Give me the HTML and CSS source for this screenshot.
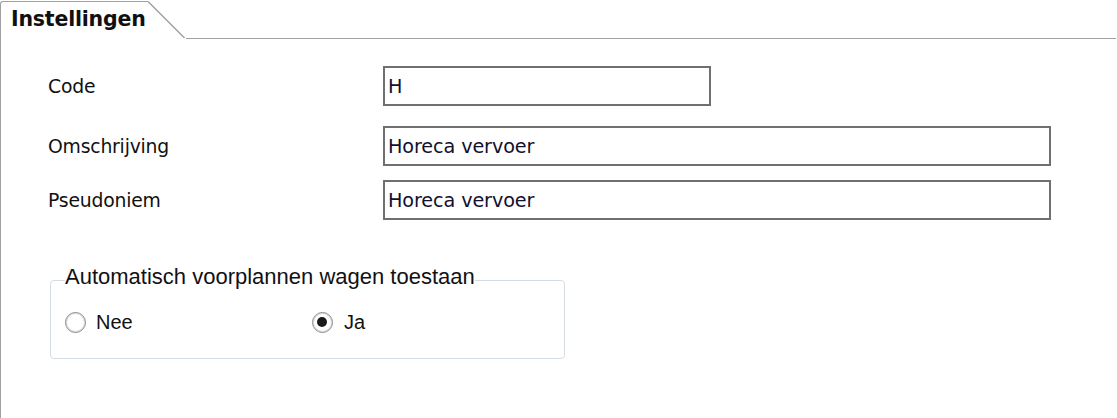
FILE: index.html
```html
<!DOCTYPE html>
<html lang="nl">
<head>
<meta charset="utf-8">
<link rel="stylesheet" href="styles.css">
</head>
<body>
<div class="panel">
  <div class="tabbar">
    <div class="tab">Instellingen</div>
    <svg class="tab-slope" width="38" height="38" viewBox="0 0 38 38"><path d="M0 1.5 L37 38.5" stroke="#a0a0a0" stroke-width="1.4" fill="none"/></svg>
    <div class="tab-rest"></div>
  </div>
  <div class="content">
    <div class="row row-code">
      <span class="label">Code</span>
      <div class="input input-short">H</div>
    </div>
    <div class="row row-omschr">
      <span class="label">Omschrijving</span>
      <div class="input input-long">Horeca vervoer</div>
    </div>
    <div class="row row-pseudo">
      <span class="label">Pseudoniem</span>
      <div class="input input-long">Horeca vervoer</div>
    </div>
    <fieldset class="group">
      <legend>Automatisch voorplannen wagen toestaan</legend>
      <div class="radios">
        <label class="radio"><span class="dot"></span>Nee</label>
        <label class="radio radio-ja"><span class="dot checked"></span>Ja</label>
      </div>
    </fieldset>
  </div>
</div>
</body>
</html>
```

FILE: styles.css
```css
html, body {
  margin: 0;
  padding: 0;
  background: #ffffff;
}
body {
  width: 1117px;
  height: 418px;
  overflow: hidden;
}
.panel {
  height: 418px;
  box-sizing: border-box;
  color: #111;
}
.tabbar {
  display: flex;
  align-items: flex-start;
  height: 39px;
}
.tab {
  box-sizing: border-box;
  width: 148px;
  height: 39px;
  margin-top: 1px;
  border-top: 1px solid #a0a0a0;
  border-left: 1px solid #a0a0a0;
  border-top-left-radius: 3px;
  padding: 5px 0 0 10px;
  font-family: "DejaVu Sans", sans-serif;
  font-weight: bold;
  font-size: 20.5px;
  letter-spacing: -0.2px;
  color: #101010;
  white-space: nowrap;
}
.tab-slope {
  flex: none;
  display: block;
}
.tab-rest {
  flex: 1;
  height: 38px;
  border-bottom: 1px solid #a0a0a0;
  margin-right: 1px;
}
.content {
  border-left: 1px solid #a0a0a0;
  height: 379px;
  box-sizing: border-box;
  padding-left: 47px;
  padding-top: 27px;
}
.row {
  display: flex;
  align-items: center;
}
.row-omschr { margin-top: 20px; }
.row-pseudo { margin-top: 14px; }
.label {
  width: 335px;
  font-family: "DejaVu Sans", sans-serif;
  font-size: 18.8px;
  letter-spacing: -0.2px;
  color: #111;
}
.input {
  box-sizing: border-box;
  height: 40px;
  border: 2px solid #707070;
  padding-left: 3px;
  display: flex;
  align-items: center;
  font-family: "DejaVu Sans", sans-serif;
  font-size: 19.2px;
  letter-spacing: -0.1px;
  color: #101030;
  background: #fff;
}
.input-short { width: 328px; }
.input-long { width: 668px; }
.group {
  margin: 45px 0 0 2px;
  width: 515px;
  height: 94px;
  box-sizing: border-box;
  border: 1px solid #d5dde3;
  border-radius: 4px;
  padding: 0 14px;
  font-family: "Liberation Sans", Arial, sans-serif;
}
.group legend {
  padding: 0 0 6px 0;
  font-size: 22px;
  color: #111;
  line-height: 24px;
}
.radios {
  display: flex;
  margin-top: 16px;
}
.radio {
  display: flex;
  align-items: center;
  font-size: 20px;
  color: #111;
  width: 247px;
}
.radio-ja { width: auto; }
.dot {
  box-sizing: border-box;
  width: 21px;
  height: 21px;
  border-radius: 50%;
  border: 1.5px solid #8a8a8a;
  background: radial-gradient(circle, #ffffff 55%, #ebebeb 100%);
  box-shadow: inset 0 0 0 1px #dcdcdc;
  margin-right: 10px;
  position: relative;
}
.dot.checked {
  margin-right: 11px;
}
.dot.checked::after {
  content: "";
  position: absolute;
  left: 4px;
  top: 4px;
  width: 10px;
  height: 10px;
  border-radius: 50%;
  background: #1a1a1a;
}
```
